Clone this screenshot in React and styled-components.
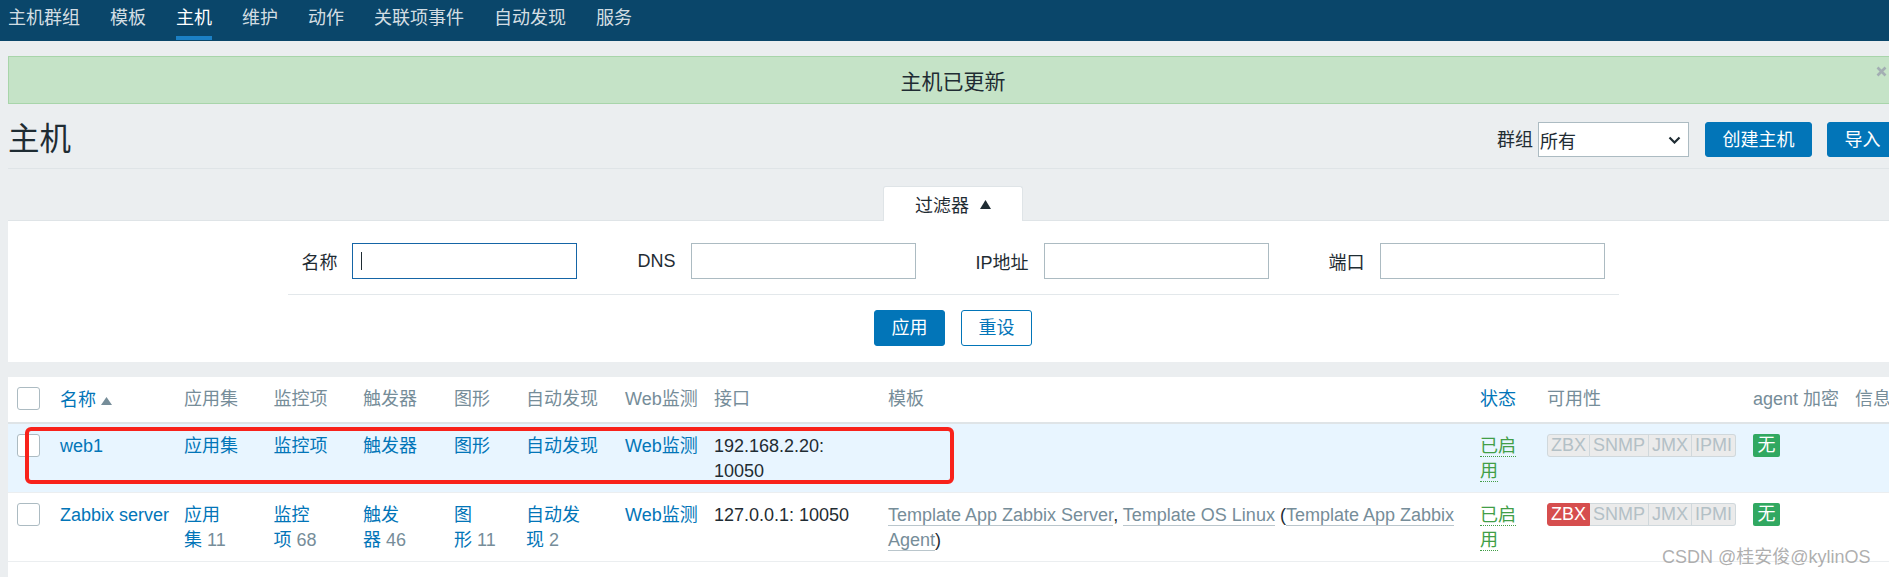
import React from 'react';
import styled, { createGlobalStyle, css } from 'styled-components';

const GlobalStyle = createGlobalStyle`
  html, body { margin: 0; padding: 0; overflow: hidden; }
  body {
    background: #ebeef0;
    font-family: "Liberation Sans", "Noto Sans CJK SC", sans-serif;
    font-size: 18px;
    color: #1f2c33;
  }
  * { box-sizing: border-box; }
`;

const Page = styled.div`
  position: relative;
  width: 1906px;
  min-height: 577px;
`;

const TopNav = styled.nav`
  height: 41px;
  background: #0a466a;
  display: flex;
  gap: 30px;
  padding-left: 8px;
`;

const NavItem = styled.a`
  position: relative;
  height: 41px;
  padding-top: 5.5px;
  line-height: 24px;
  white-space: nowrap;
  text-decoration: none;
  color: ${p => (p.$active ? '#ffffff' : 'rgba(255,255,255,0.84)')};
  ${p =>
    p.$active &&
    css`
      &::after {
        content: '';
        position: absolute;
        left: 0;
        right: 0;
        bottom: 1px;
        height: 4px;
        background: #1b80c5;
      }
    `}
`;

const Content = styled.main`
  padding: 0 8px;
`;

const Message = styled.div`
  position: relative;
  margin-top: 15px;
  height: 48px;
  border: 1px solid #a8d5aa;
  background: #c5e3c7;
  display: flex;
  align-items: center;
  justify-content: center;
  font-size: 21px;
  color: #1f2c33;
`;

const CloseBtn = styled.span`
  position: absolute;
  right: 10px;
  top: 9px;
  display: flex;
`;

const Header = styled.header`
  display: flex;
  align-items: center;
  justify-content: space-between;
  padding: 18px 0 11px;
  border-bottom: 1px solid #dfe4e7;
`;

const Title = styled.h1`
  margin: 0;
  font-size: 31.5px;
  line-height: 35px;
  font-weight: normal;
`;

const Controls = styled.div`
  display: flex;
  align-items: center;
`;

const ControlLabel = styled.span`
  margin-right: 5px;
  line-height: 24px;
`;

const SelectBox = styled.div`
  width: 151px;
  height: 35px;
  border: 1px solid #acbbc2;
  background: #fff;
  display: flex;
  align-items: center;
  justify-content: space-between;
  padding: 0 7px 0 1px;
  margin-right: 16px;
`;

const Button = styled.button`
  height: ${p => p.$h || 35}px;
  padding: 0 16.5px;
  border: 1px solid #0275b8;
  border-radius: 3px;
  background: ${p => (p.$outline ? '#ffffff' : '#0275b8')};
  color: ${p => (p.$outline ? '#0275b8' : '#ffffff')};
  font-family: inherit;
  font-size: 18px;
  line-height: 1;
  margin-left: ${p => p.$ml || 0}px;
  cursor: pointer;
`;

const FilterTabs = styled.div`
  display: flex;
  justify-content: center;
  padding-top: 17px;
`;

const FilterTab = styled.div`
  position: relative;
  z-index: 1;
  width: 140px;
  height: 35px;
  margin-bottom: -1px;
  background: #fff;
  border: 1px solid #dfe4e7;
  border-bottom: none;
  border-radius: 3px 3px 0 0;
  display: flex;
  align-items: center;
  justify-content: center;
  gap: 11px;
`;

const FilterPanel = styled.section`
  background: #fff;
  border-top: 1px solid #dfe4e7;
  padding: 22px 0 16px;
`;

const FormRow = styled.div`
  display: flex;
  justify-content: center;
  gap: 60px;
  padding-bottom: 15px;
`;

const Field = styled.label`
  display: flex;
  align-items: center;
  gap: 15px;
  white-space: nowrap;
`;

const TextInput = styled.input`
  width: 225px;
  height: 36px;
  border: 1px solid ${p => (p.$focused ? '#1565a6' : '#acbbc2')};
  background: #fff;
  padding: 0 7.5px;
  font-family: inherit;
  font-size: 18px;
  color: #1f2c33;
  outline: none;
  ${p =>
    p.$focused &&
    css`
      background: linear-gradient(#1f2c33, #1f2c33) 8px 50% / 1px 18px no-repeat, #fff;
    `}
`;

const ButtonsRow = styled.div`
  width: 1331px;
  margin: 0 auto;
  border-top: 1px solid #e3e8eb;
  padding-top: 15px;
  display: flex;
  justify-content: center;
  gap: 16px;
`;

const TableSection = styled.section`
  margin-top: 15px;
  background: #fff;
  padding-bottom: 40px;
`;

const cols =
  '44.5px 124px 89.5px 89.5px 91px 72px 99px 89px 174px 592px 67px 206px 102px minmax(0,1fr)';

const Row = styled.div`
  display: grid;
  grid-template-columns: ${cols};
  background: ${p => (p.$highlight ? '#e8f5ff' : 'transparent')};
  border-bottom: ${p => (p.$head ? '2px solid #dfe4e7' : '1px solid #ebeef0')};
`;

const Cell = styled.div`
  min-width: 0;
  line-height: 25px;
  padding: ${p => (p.$head ? '10px 7.5px 9px' : '10px 7.5px 8px')};
  color: ${p => (p.$head ? '#768d99' : '#1f2c33')};
  white-space: ${p => (p.$head ? 'nowrap' : 'normal')};
  &:first-child { padding-left: 9px; }
  ${p => p.$tight && css`padding-right: 2px;`}
`;

const Checkbox = styled.span`
  display: block;
  width: 23px;
  height: 23px;
  border: 1px solid #acbbc2;
  border-radius: 3px;
  background: #fff;
`;

const Link = styled.a`
  color: #0275b8;
  text-decoration: none;
  ${p => p.$nowrap && css`white-space: nowrap;`}
`;

const NoWrap = styled.span`
  white-space: nowrap;
`;

const Count = styled.span`
  color: #768d99;
`;

const SortArrow = styled.span`
  display: inline-block;
  margin-left: 5px;
  vertical-align: 1px;
`;

const TemplateLink = styled.a`
  color: #768d99;
  text-decoration: none;
  border-bottom: 1px solid rgba(118, 141, 153, 0.5);
`;

const StatusLink = styled.a`
  color: #429e47;
  text-decoration: none;
  border-bottom: 1px dotted #429e47;
`;

const AvailGroup = styled.div`
  display: flex;
  width: max-content;
`;

const AvailItem = styled.span`
  height: 23px;
  line-height: 21px;
  padding: 0 3px;
  border: 1px solid ${p => (p.$red ? '#d64e4e' : '#d0d8dc')};
  background: ${p => (p.$red ? '#d64e4e' : '#ebebeb')};
  color: ${p => (p.$red ? '#ffffff' : '#b3c0c6')};
  & + & { border-left: none; }
  &:first-child { border-radius: 3px 0 0 3px; }
  &:last-child { border-radius: 0 3px 3px 0; }
`;

const Badge = styled.span`
  display: block;
  width: max-content;
  height: 23px;
  line-height: 23px;
  padding: 0 4.5px;
  border-radius: 2px;
  background: #31a861;
  color: #fff;
`;

const Annotation = styled.div`
  position: absolute;
  left: 25px;
  top: 427px;
  width: 929px;
  height: 57px;
  border: 4px solid #f8221b;
  border-radius: 6px;
  pointer-events: none;
`;

const Watermark = styled.div`
  position: absolute;
  left: 1662px;
  top: 546px;
  font-size: 18px;
  line-height: 22px;
  color: rgba(140, 140, 140, 0.7);
  white-space: nowrap;
`;

const Triangle = ({ w = 11, h = 9, color = '#1f2c33' }) => (
  <svg width={w} height={h} viewBox={`0 0 ${w} ${h}`}>
    <polygon points={`0,${h} ${w / 2},0 ${w},${h}`} fill={color} />
  </svg>
);

const navItems = ['主机群组', '模板', '主机', '维护', '动作', '关联项事件', '自动发现', '服务'];

const Avail = ({ zbxRed }) => (
  <AvailGroup>
    <AvailItem $red={zbxRed}>ZBX</AvailItem>
    <AvailItem>SNMP</AvailItem>
    <AvailItem>JMX</AvailItem>
    <AvailItem>IPMI</AvailItem>
  </AvailGroup>
);

const Counted = ({ head, tail, n }) => (
  <>
    <Link>{head}</Link>
    <NoWrap>
      <Link>{tail}</Link> <Count>{n}</Count>
    </NoWrap>
  </>
);

export default function App() {
  return (
    <Page>
      <GlobalStyle />
      <TopNav>
        {navItems.map(n => (
          <NavItem key={n} $active={n === '主机'}>
            {n}
          </NavItem>
        ))}
      </TopNav>
      <Content>
        <Message>
          主机已更新
          <CloseBtn>
            <svg width="11" height="11" viewBox="0 0 11 11">
              <path d="M1.5 1.5 L9.5 9.5 M9.5 1.5 L1.5 9.5" stroke="#a3aeb3" strokeWidth="2.6" />
            </svg>
          </CloseBtn>
        </Message>

        <Header>
          <Title>主机</Title>
          <Controls>
            <ControlLabel>群组</ControlLabel>
            <SelectBox>
              <span>所有</span>
              <svg width="13" height="8" viewBox="0 0 13 8">
                <polyline points="1.5,1.5 6.5,6.5 11.5,1.5" fill="none" stroke="#1f2c33" strokeWidth="2.2" />
              </svg>
            </SelectBox>
            <Button>创建主机</Button>
            <Button $ml={15}>导入</Button>
          </Controls>
        </Header>

        <FilterTabs>
          <FilterTab>
            <span>过滤器</span>
            <Triangle w={11} h={9} />
          </FilterTab>
        </FilterTabs>
        <FilterPanel>
          <FormRow>
            <Field>
              名称 <TextInput $focused />
            </Field>
            <Field>
              DNS <TextInput />
            </Field>
            <Field>
              IP地址 <TextInput />
            </Field>
            <Field>
              端口 <TextInput />
            </Field>
          </FormRow>
          <ButtonsRow>
            <Button $h={36}>应用</Button>
            <Button $h={36} $outline>
              重设
            </Button>
          </ButtonsRow>
        </FilterPanel>

        <TableSection>
          <Row $head>
            <Cell $head>
              <Checkbox />
            </Cell>
            <Cell $head>
              <Link>名称</Link>
              <SortArrow>
                <Triangle w={11} h={8} color="#768d99" />
              </SortArrow>
            </Cell>
            <Cell $head>应用集</Cell>
            <Cell $head>监控项</Cell>
            <Cell $head>触发器</Cell>
            <Cell $head>图形</Cell>
            <Cell $head>自动发现</Cell>
            <Cell $head>Web监测</Cell>
            <Cell $head>接口</Cell>
            <Cell $head>模板</Cell>
            <Cell $head>
              <Link>状态</Link>
            </Cell>
            <Cell $head>可用性</Cell>
            <Cell $head>agent 加密</Cell>
            <Cell $head>信息</Cell>
          </Row>

          <Row $highlight>
            <Cell>
              <Checkbox />
            </Cell>
            <Cell>
              <Link $nowrap>web1</Link>
            </Cell>
            <Cell>
              <Link>应用集</Link>
            </Cell>
            <Cell>
              <Link>监控项</Link>
            </Cell>
            <Cell>
              <Link>触发器</Link>
            </Cell>
            <Cell>
              <Link>图形</Link>
            </Cell>
            <Cell>
              <Link>自动发现</Link>
            </Cell>
            <Cell>
              <Link $nowrap>Web监测</Link>
            </Cell>
            <Cell>192.168.2.20: 10050</Cell>
            <Cell $tight />
            <Cell>
              <StatusLink>已启用</StatusLink>
            </Cell>
            <Cell>
              <Avail />
            </Cell>
            <Cell>
              <Badge>无</Badge>
            </Cell>
            <Cell />
          </Row>

          <Row>
            <Cell>
              <Checkbox />
            </Cell>
            <Cell>
              <Link $nowrap>Zabbix server</Link>
            </Cell>
            <Cell>
              <Counted head="应用" tail="集" n="11" />
            </Cell>
            <Cell>
              <Counted head="监控" tail="项" n="68" />
            </Cell>
            <Cell>
              <Counted head="触发" tail="器" n="46" />
            </Cell>
            <Cell>
              <Counted head="图" tail="形" n="11" />
            </Cell>
            <Cell>
              <Counted head="自动发" tail="现" n="2" />
            </Cell>
            <Cell>
              <Link $nowrap>Web监测</Link>
            </Cell>
            <Cell>127.0.0.1: 10050</Cell>
            <Cell $tight>
              <TemplateLink>Template App Zabbix Server</TemplateLink>, <TemplateLink>Template OS Linux</TemplateLink> (
              <TemplateLink>Template App Zabbix Agent</TemplateLink>)
            </Cell>
            <Cell>
              <StatusLink>已启用</StatusLink>
            </Cell>
            <Cell>
              <Avail zbxRed />
            </Cell>
            <Cell>
              <Badge>无</Badge>
            </Cell>
            <Cell />
          </Row>
        </TableSection>
      </Content>

      <Annotation />
      <Watermark>CSDN @桂安俊@kylinOS</Watermark>
    </Page>
  );
}
